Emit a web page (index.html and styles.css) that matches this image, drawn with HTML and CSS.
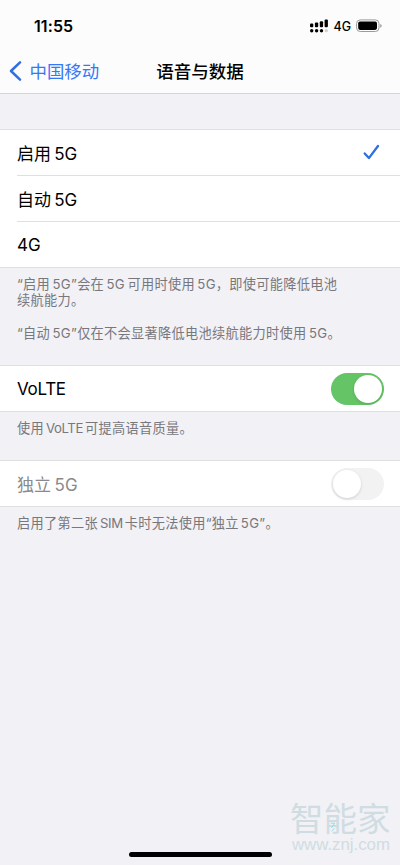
FILE: index.html
```html
<!DOCTYPE html>
<html lang="zh-CN">
<head>
<meta charset="utf-8">
<title>语音与数据</title>
<link rel="stylesheet" href="styles.css">
</head>
<body>
<div class="screen">
  <header class="top">
    <div class="status">
      <span class="time">11:55</span>
      <div class="indicators">
        <svg class="signal" width="18" height="14" viewBox="0 0 18 14">
          <rect x="0" y="4.6" width="3.3" height="3.6" rx="1"/>
          <rect x="4.9" y="3.4" width="3.3" height="4.8" rx="1"/>
          <rect x="9.8" y="2.2" width="3.3" height="6" rx="1"/>
          <rect x="14.6" y="0.4" width="3.3" height="7.8" rx="1"/>
          <circle cx="1.7" cy="11.7" r="1.7"/>
          <circle cx="6.6" cy="11.7" r="1.7"/>
          <circle cx="11.5" cy="11.7" r="1.7"/>
          <circle cx="16.3" cy="11.7" r="1.6" fill="#cfcfd1"/>
        </svg>
        <span class="network">4G</span>
        <svg class="battery" width="26" height="14" viewBox="0 0 26 14">
          <rect x="0.6" y="0.9" width="22.4" height="11.6" rx="3.6" fill="none" stroke="#9b9b9d"/>
          <rect x="2.2" y="2.5" width="18.8" height="8.4" rx="1.8"/>
          <path d="M24.2 4.9q1.5.6 1.5 1.9t-1.5 1.9z" fill="#9b9b9d"/>
        </svg>
      </div>
    </div>
    <nav class="nav">
      <a class="back">
        <svg width="13" height="20" viewBox="0 0 13 20"><path d="M11 1.4L2 10l9 8.6"/></svg>
        <span>中国移动</span>
      </a>
      <h1>语音与数据</h1>
    </nav>
  </header>

  <main>
    <section class="group modes">
      <div class="row">启用 5G
        <svg class="check" width="17" height="17" viewBox="0 0 17 17"><path d="M1.7 9.4l4.2 4.7L15 2"/></svg>
      </div>
      <div class="row">自动 5G</div>
      <div class="row">4G</div>
    </section>
    <div class="note">
      <p>“启用 5G”会在 5G 可用时使用 5G，即使可能降低电池<br>续航能力。</p>
      <p>“自动 5G”仅在不会显著降低电池续航能力时使用 5G。</p>
    </div>

    <section class="group volte">
      <div class="row">VoLTE<span class="switch on"></span></div>
    </section>
    <div class="note"><p>使用 <span class="tight">VoLTE</span> 可提高语音质量。</p></div>

    <section class="group standalone">
      <div class="row disabled">独立 5G<span class="switch"></span></div>
    </section>
    <div class="note"><p>启用了第二张 <span class="tight">SIM</span> 卡时无法使用“独立 5G”。</p></div>
  </main>

  <div class="watermark">
    <div class="brand">智能家</div>
    <div class="site">www.znj.com</div>
    <svg class="mark" width="6" height="10" viewBox="0 0 6 10"><path d="M.8 1.2h4L1.4 6M4.6 6.4L1.6 9"/></svg>
  </div>
  <div class="home"></div>
</div>
</body>
</html>
```
FILE: styles.css
```css
* { box-sizing: border-box; }
body {
  margin: 0;
  background: #f2f1f6;
  font-family: Inter, "Noto Sans CJK SC", sans-serif;
  color: #000;
}
.screen {
  position: relative;
  height: 865px;
  overflow: hidden;
}
.top {
  height: 94px;
  background: #fcfcfc;
  border-bottom: 1px solid #d5d5d8;
}
.status {
  height: 52px;
  padding: 0 18px 0 34px;
  display: flex;
  align-items: center;
  justify-content: space-between;
}
.time {
  font-size: 16px;
  font-weight: 600;
  letter-spacing: 0.1px;
}
.indicators {
  display: flex;
  align-items: center;
}
.network {
  margin: 0 5px;
  font-size: 12.5px;
  font-weight: 500;
}
.nav {
  height: 38px;
  display: grid;
  grid-template-columns: 1fr auto 1fr;
  align-items: center;
}
.back {
  display: flex;
  align-items: center;
  gap: 7.5px;
  padding-left: 9px;
  color: #3478f6;
  font-size: 17.4px;
}
.back span { padding-bottom: 2px; }
.back svg path {
  fill: none;
  stroke: #2f6fe0;
  stroke-width: 2.5;
  stroke-linecap: round;
  stroke-linejoin: round;
}
.nav h1 {
  margin: 0;
  padding-bottom: 2px;
  font-size: 17.5px;
  font-weight: 500;
}
.group {
  background: #fff;
  border-top: 1px solid #e0e0e3;
  border-bottom: 1px solid #e0e0e3;
  padding-left: 17px;
}
.modes { margin-top: 35px; }
.volte { margin-top: 23.4px; }
.standalone { margin-top: 24px; }
.row {
  height: 45px;
  padding-right: 16px;
  display: flex;
  align-items: center;
  justify-content: space-between;
  font-size: 17px;
  word-spacing: -1.2px;
}
.modes .row { letter-spacing: -0.1px; }
.volte .row { letter-spacing: -0.3px; }
.row + .row {
  height: 46px;
  border-top: 1px solid #e0e0e3;
}
.disabled { color: #8a8a8c; }
.check { margin-right: 4px; }
.check path {
  fill: none;
  stroke: #2f6fe0;
  stroke-width: 2.3;
  stroke-linecap: round;
  stroke-linejoin: round;
}
.note {
  padding: 8px 17px 0;
  font-size: 13.2px;
  line-height: 16.4px;
  letter-spacing: 0.31px;
  word-spacing: -1.6px;
  color: #77777c;
  white-space: nowrap;
}
.volte + .note,
.standalone + .note { word-spacing: -2px; }
.note p { margin: 0; }
.note p + p { margin-top: 16.4px; }
.tight { letter-spacing: -0.4px; }
.switch {
  width: 53px;
  height: 32px;
  border-radius: 16px;
  background: #f2f2f3;
  display: flex;
  align-items: center;
  padding: 0 2px;
}
.switch::before {
  content: "";
  width: 28px;
  height: 28px;
  border-radius: 50%;
  background: #fff;
  box-shadow: 0 1px 3px rgba(0, 0, 0, 0.15);
}
.switch.on {
  background: #65c466;
  justify-content: flex-end;
}
.watermark {
  position: absolute;
  left: 290px;
  top: 803px;
  width: 100px;
  color: #cfdde2;
  white-space: nowrap;
}
.brand {
  font-size: 33.5px;
  line-height: 33px;
  font-weight: 400;
}
.site {
  font-family: "Liberation Sans", sans-serif;
  font-size: 16.8px;
  line-height: 18px;
  margin-left: 2px;
}
.mark {
  position: absolute;
  left: 40px;
  top: 19px;
  fill: none;
  stroke: #8fdde6;
}
.home {
  position: absolute;
  left: 129px;
  top: 852px;
  width: 143px;
  height: 5px;
  border-radius: 3px;
  background: #000;
}
```
